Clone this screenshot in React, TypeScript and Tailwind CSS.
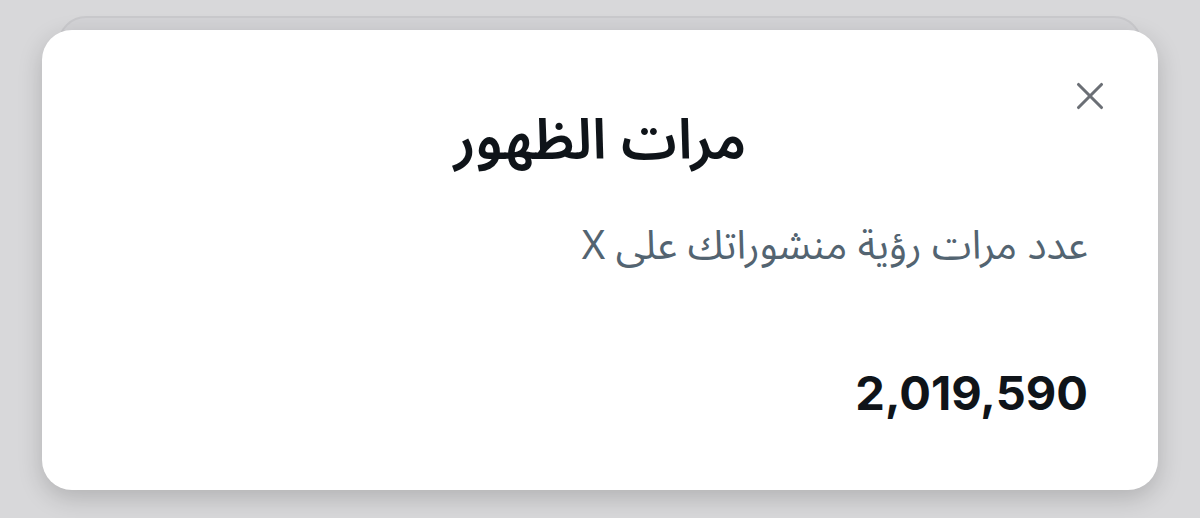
import { X } from "lucide-react";

export default function App() {
  return (
    <div
      className="h-[518px] w-[1200px] overflow-hidden bg-[#d8d8da] px-[42px] pt-[30px]"
      style={{ fontFamily: '"Noto Sans Arabic", Inter, "DejaVu Sans", sans-serif' }}
    >
      <div className="relative">
        {/* stacked card peeking out behind */}
        <div className="absolute left-[16px] right-[16px] top-[-14px] h-[60px] rounded-[28px] border-2 border-[#c9c9cc] bg-[#d3d3d6]" />

        <div
          dir="rtl"
          className="relative flex h-[460px] flex-col rounded-[30px] bg-white px-[70px] shadow-[0_8px_24px_rgba(0,0,0,0.18)]"
        >
          <button className="absolute right-[45px] top-[43px] flex h-[46px] w-[46px] items-center justify-center text-[#6b6f75]">
            <X size={46} strokeWidth={1.6} />
          </button>

          <h1 className="mt-[76px] text-center text-[56px] font-semibold leading-[70px] text-[#0f1419]">
            مرات الظهور
          </h1>

          <p className="mt-[43px] text-[40px] leading-[56px] text-[#536471]">
            عدد مرات رؤية منشوراتك على X
          </p>

          <p
            className="mt-[90px] text-[47px] font-bold leading-[56px] text-[#0f1419]"
            style={{ fontFamily: "Inter, sans-serif" }}
          >
            2,019,590
          </p>
        </div>
      </div>
    </div>
  );
}
